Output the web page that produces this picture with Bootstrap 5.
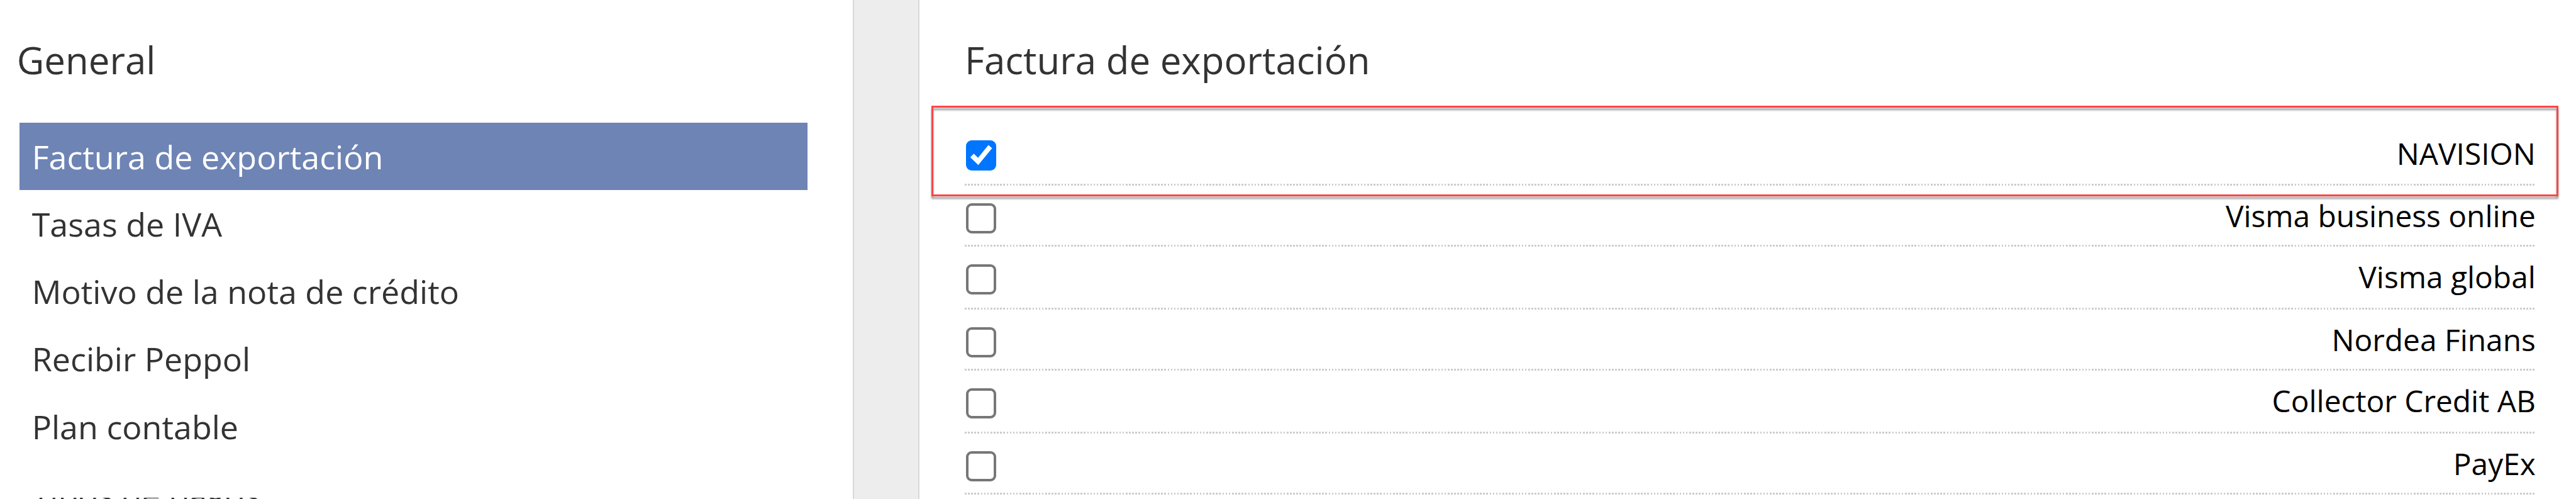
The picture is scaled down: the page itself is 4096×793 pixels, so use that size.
<!DOCTYPE html>
<html lang="es">
<head>
    <meta charset="UTF-8">
    <title>Factura de exportación</title>
    <link href="https://cdn.jsdelivr.net/npm/bootstrap@5.3.3/dist/css/bootstrap.min.css" rel="stylesheet">
    <style>
        body {
            font-family: "Open Sans", sans-serif;
            color: #333;
        }
        .panel-title {
            font-size: 60px;
            line-height: 60px;
            font-weight: 400;
        }

        /* Menú lateral */
        .sidebar {
            width: 1357.5px;
            padding: 65px 71.5px 0 30.7px;
            border-right: 2px solid #d8d8d8;
        }
        .sidebar .panel-title {
            margin: 0 0 69.6px -4px;
        }
        .menu-item {
            height: 107.3px;
            padding: 1px 0 0 20px;
            font-size: 52px;
            line-height: 106.3px;
            border: 0;
            border-radius: 0;
            color: #333;
        }
        .menu-item.active {
            background-color: #6e84b5;
            color: #fff;
        }
        .menu-item.cut {
            clip-path: inset(60px 0 0 0);
        }
        .gutter {
            width: 102.5px;
            background-color: #ededed;
        }

        /* Opciones de exportación */
        .content {
            padding: 65px 62.7px 0 72px;
            border-left: 2px solid #d8d8d8;
        }
        .content .panel-title {
            margin-bottom: 72px;
        }
        .option {
            height: 97px;
            padding-bottom: 21.5px;
            background: repeating-linear-gradient(90deg, #ccc 0 2.56px, transparent 2.56px 5.12px) 0 100% / 100% 3px no-repeat;
        }
        .option:nth-child(odd) {
            height: 100px;
            padding-bottom: 24px;
        }
        .option:first-child {
            height: 98px;
        }
        .option label {
            font-size: 47.85px;
            line-height: 48px;
            margin: 0 1.5px 4px 0;
            color: #000;
        }
        .option:first-child label {
            margin-bottom: 3px;
        }
        .option .form-check-input {
            width: 48px;
            height: 48px;
            margin: 0 0 0 2px;
            border: 4px solid #777;
            border-radius: 9px;
        }
        .option .form-check-input:checked {
            background-color: #0075ff;
            border: 0;
            background-size: 100%;
            background-image: url("data:image/svg+xml,%3Csvg xmlns='http://www.w3.org/2000/svg' viewBox='0 0 155 155'%3E%3Cpath fill='%23fff' d='M22 87L40 69L62 90L115 24L134 40L63 127Z'/%3E%3C/svg%3E");
        }
        .highlight {
            top: 167.5px;
            left: 18.5px;
            right: 28px;
            height: 144.5px;
            border: 3px solid #ff4545;
            filter: drop-shadow(0 4px 1.5px rgba(0, 0, 0, .4));
            pointer-events: none;
        }
    </style>
</head>
<body class="bg-white">

<div class="d-flex vh-100 overflow-hidden">
    <aside class="sidebar flex-shrink-0">
        <h2 class="panel-title">General</h2>
        <div class="list-group list-group-flush">
            <a class="list-group-item menu-item active">Factura de exportación</a>
            <a class="list-group-item menu-item">Tasas de IVA</a>
            <a class="list-group-item menu-item">Motivo de la nota de crédito</a>
            <a class="list-group-item menu-item">Recibir Peppol</a>
            <a class="list-group-item menu-item">Plan contable</a>
            <a class="list-group-item menu-item cut">Tipos de pagos</a>
        </div>
    </aside>

    <div class="gutter flex-shrink-0"></div>

    <main class="content flex-grow-1 position-relative">
        <h2 class="panel-title">Factura de exportación</h2>
        <div>
            <div class="option d-flex justify-content-between align-items-end">
                <input type="checkbox" class="form-check-input" id="navision" checked>
                <label for="navision">NAVISION</label>
            </div>
            <div class="option d-flex justify-content-between align-items-end">
                <input type="checkbox" class="form-check-input" id="vismaBusiness">
                <label for="vismaBusiness">Visma business online</label>
            </div>
            <div class="option d-flex justify-content-between align-items-end">
                <input type="checkbox" class="form-check-input" id="vismaGlobal">
                <label for="vismaGlobal">Visma global</label>
            </div>
            <div class="option d-flex justify-content-between align-items-end">
                <input type="checkbox" class="form-check-input" id="nordea">
                <label for="nordea">Nordea Finans</label>
            </div>
            <div class="option d-flex justify-content-between align-items-end">
                <input type="checkbox" class="form-check-input" id="collector">
                <label for="collector">Collector Credit AB</label>
            </div>
            <div class="option d-flex justify-content-between align-items-end">
                <input type="checkbox" class="form-check-input" id="payex">
                <label for="payex">PayEx</label>
            </div>
        </div>
        <div class="highlight position-absolute"></div>
    </main>
</div>

<script src="https://cdn.jsdelivr.net/npm/bootstrap@5.3.3/dist/js/bootstrap.bundle.min.js"></script>
</body>
</html>
